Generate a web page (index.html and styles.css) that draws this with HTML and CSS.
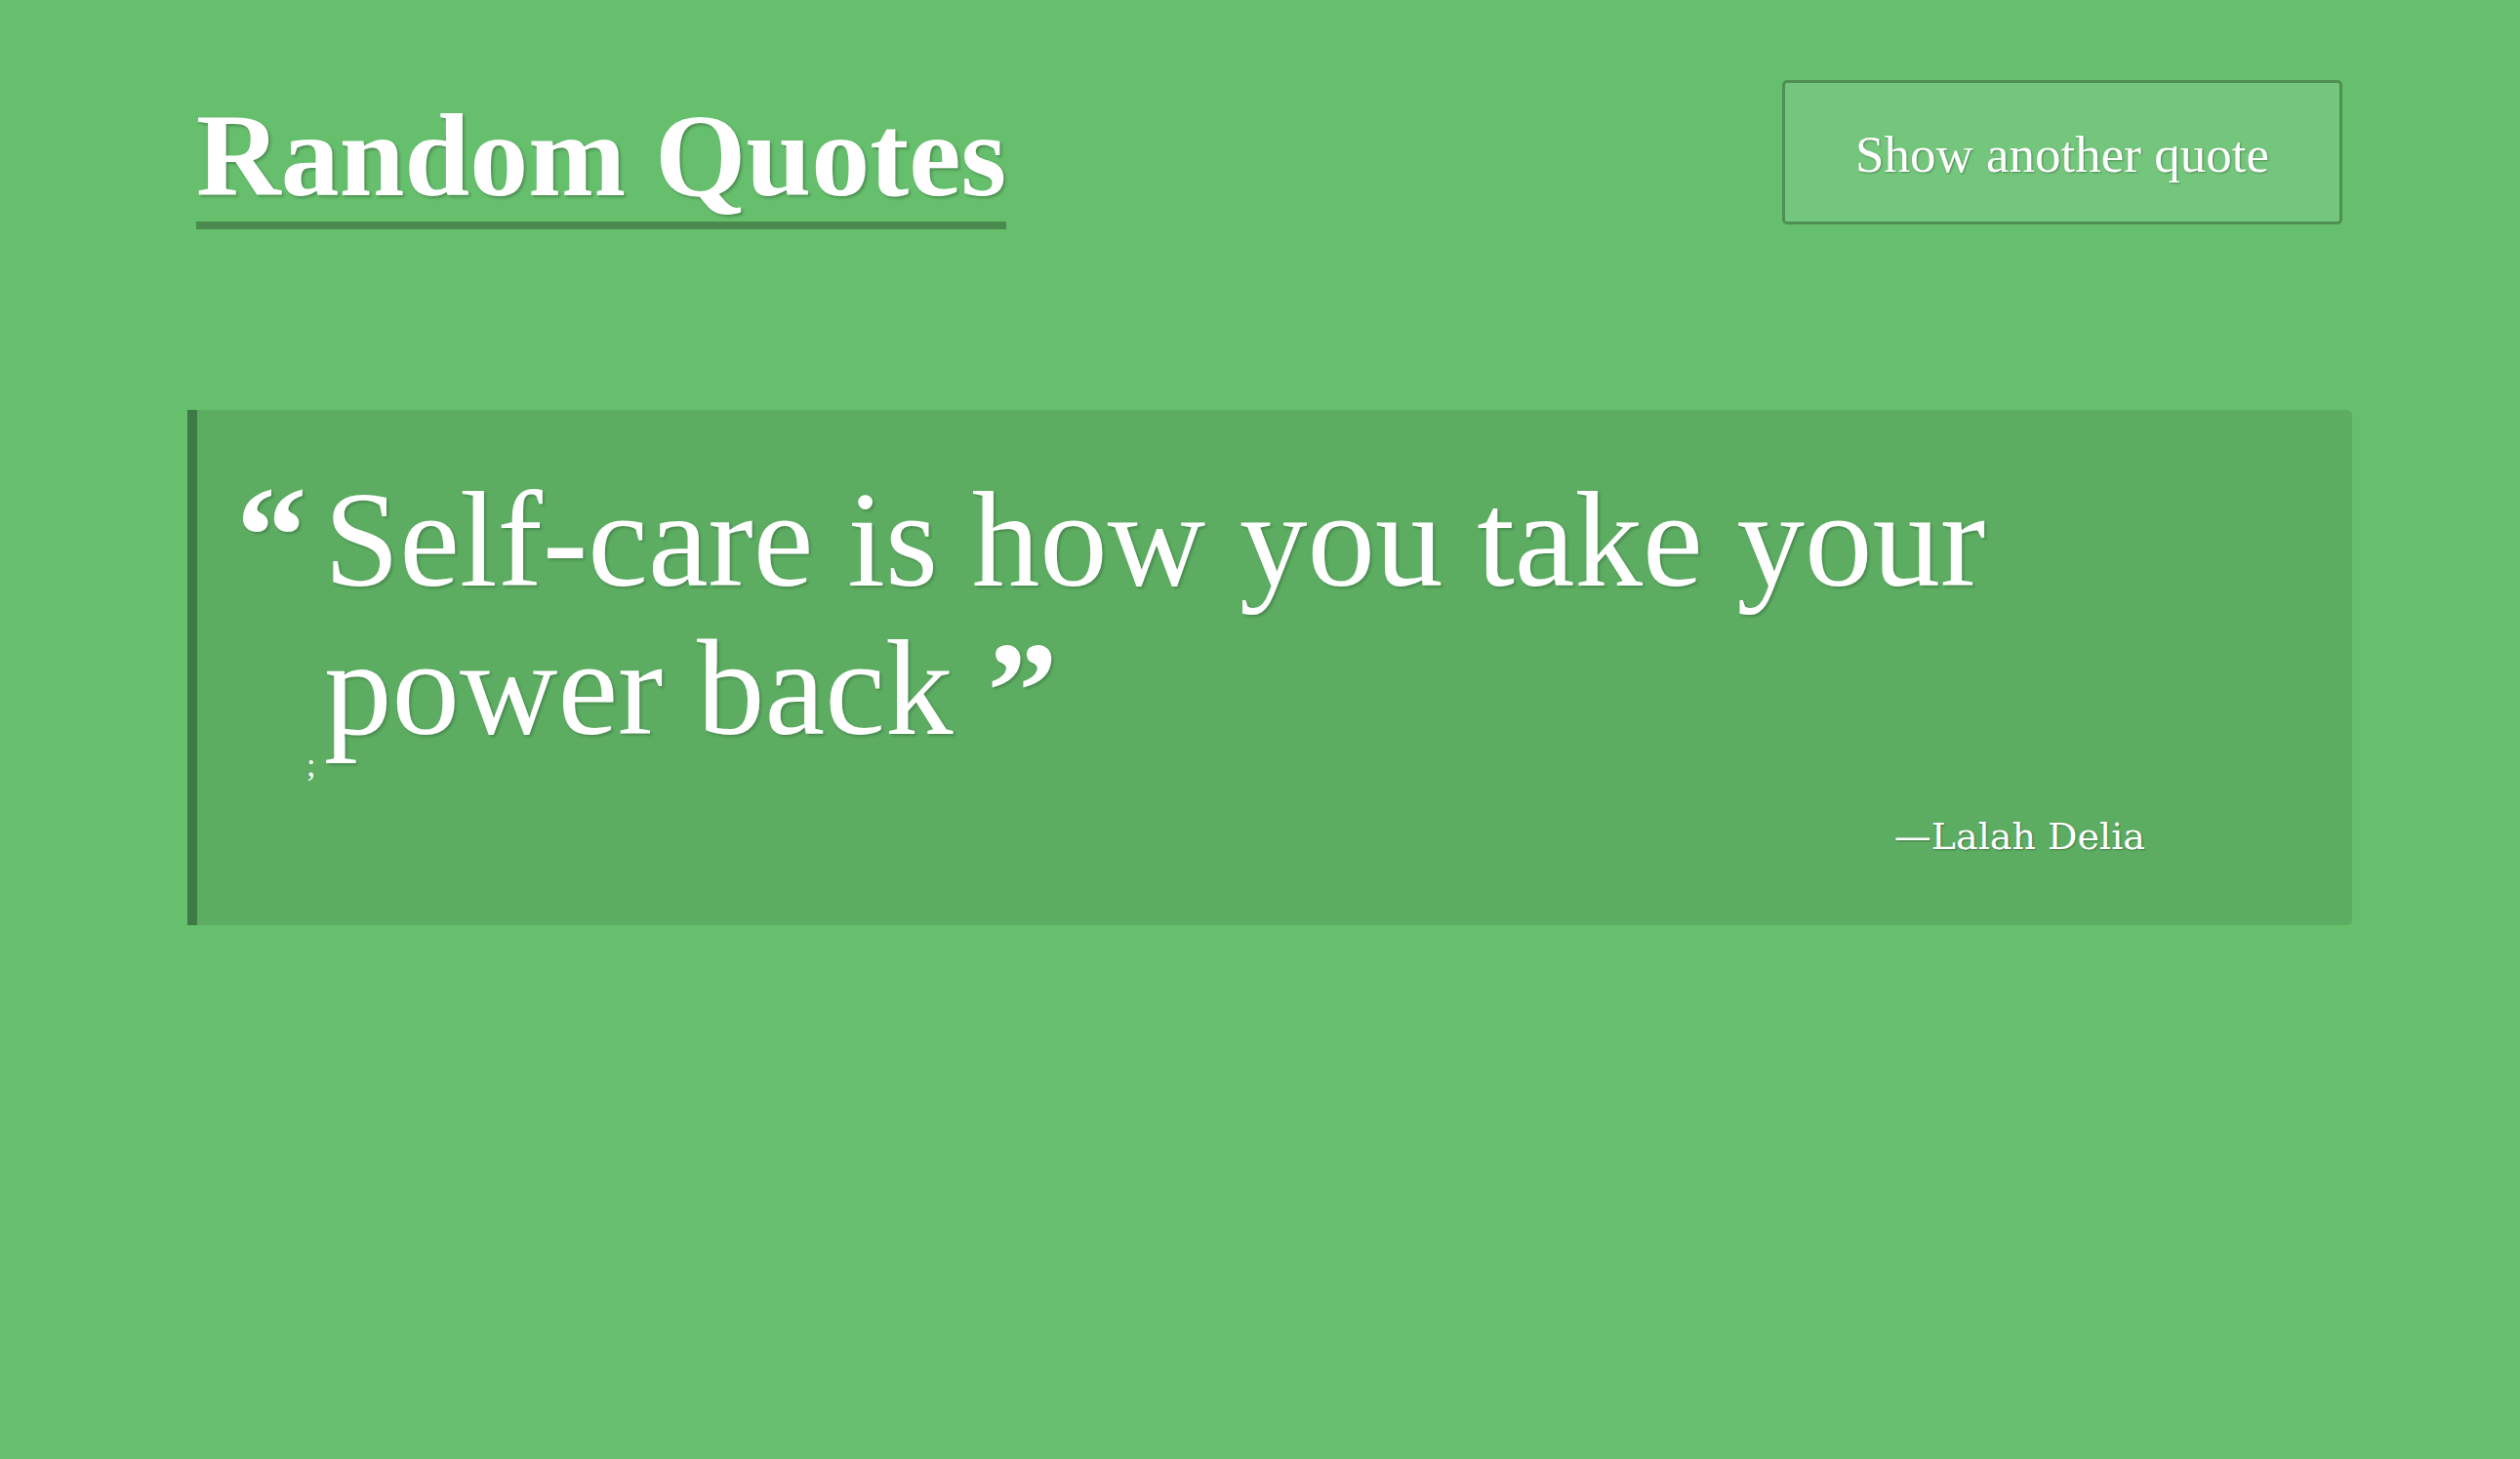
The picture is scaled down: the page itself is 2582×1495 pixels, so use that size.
FILE: index.html
```html
<!DOCTYPE html>
<html lang="en">
<head>
<meta charset="utf-8">
<title>Random Quotes</title>
<link rel="stylesheet" href="styles.css">
</head>
<body>
<div class="page">
  <header class="header">
    <h1 class="title">Random Quotes</h1>
    <button class="btn">Show another quote</button>
  </header>
  <main class="quote-box">
    <div class="quote-row">
      <span class="q-open">“</span>
      <p class="quote-text">Self-care is how you take your power back <span class="q-close">”</span></p>
    </div>
    <div class="stray">;</div>
    <p class="author">—Lalah Delia</p>
  </main>
</div>
</body>
</html>
```

FILE: styles.css
```css
html, body {
  margin: 0;
  padding: 0;
  background: #66bf6d;
  min-height: 100%;
}
body {
  font-family: "Liberation Serif", "Times New Roman", serif;
  color: #ffffff;
}
.page {
  padding: 82px 182px 0 201px;
}
.header {
  display: flex;
  justify-content: space-between;
  align-items: flex-start;
}
.title {
  display: inline-block;
  margin: 18px 0 0 0;
  font-size: 120px;
  font-weight: 700;
  line-height: 1;
  padding-bottom: 7px;
  border-bottom: 8px solid #4a8a4e;
  text-shadow: 2px 2px 3px rgba(0, 0, 0, 0.25);
}
.btn {
  width: 574px;
  height: 148px;
  box-sizing: border-box;
  margin: 0;
  padding: 4px 0 0 0;
  background: #73c67b;
  border: 3px solid #4f8f54;
  border-radius: 5px;
  color: #ffffff;
  font-family: "Liberation Serif", "Times New Roman", serif;
  font-size: 53px;
  line-height: 1;
  text-shadow: 1px 1px 2px rgba(0, 0, 0, 0.3);
  cursor: pointer;
}
.quote-box {
  margin: 185px -10px 0 -9px;
  background: #5cad62;
  border-left: 10px solid #3e7a45;
  border-radius: 0 6px 6px 0;
  padding: 57px 212px 72px 0;
}
.quote-row {
  display: flex;
  align-items: flex-start;
}
.q-open {
  flex: 0 0 auto;
  width: 90px;
  padding-left: 40px;
  font-size: 145px;
  font-weight: 700;
  line-height: 1;
  margin-top: -1px;
  text-shadow: 2px 2px 3px rgba(0, 0, 0, 0.2);
}
.quote-text {
  margin: 0;
  flex: 1 1 auto;
  font-size: 139px;
  line-height: 152px;
  text-shadow: 2px 2px 3px rgba(0, 0, 0, 0.2);
}
.q-close {
  font-weight: 700;
  font-size: 145px;
  line-height: 0;
  position: relative;
  top: 5px;
}
.stray {
  margin: 3px 0 0 112px;
  font-size: 34px;
  line-height: 0;
  height: 0;
}
.author {
  margin: 54px 0 0 0;
  text-align: right;
  font-family: "DejaVu Serif", "Liberation Serif", serif;
  font-size: 38px;
  line-height: 1;
  text-shadow: 1px 1px 2px rgba(0, 0, 0, 0.3);
}
```
